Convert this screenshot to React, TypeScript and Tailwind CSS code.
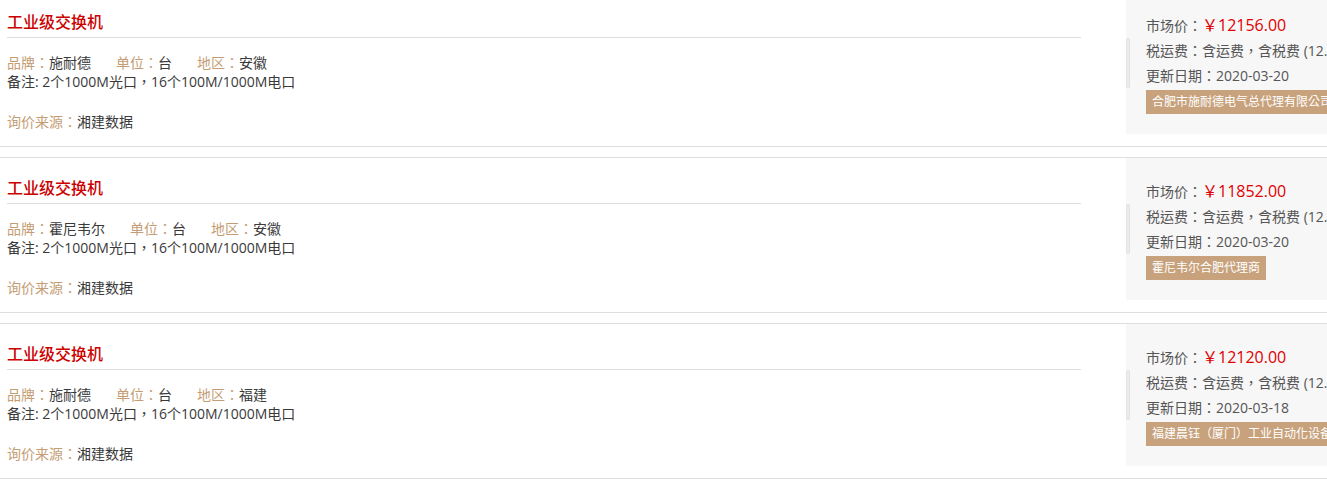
const items = [
  {
    brand: "施耐德",
    unit: "台",
    region: "安徽",
    price: "12156.00",
    date: "2020-03-20",
    seller: "合肥市施耐德电气总代理有限公司",
  },
  {
    brand: "霍尼韦尔",
    unit: "台",
    region: "安徽",
    price: "11852.00",
    date: "2020-03-20",
    seller: "霍尼韦尔合肥代理商",
  },
  {
    brand: "施耐德",
    unit: "台",
    region: "福建",
    price: "12120.00",
    date: "2020-03-18",
    seller: "福建晨钰（厦门）工业自动化设备有限公司",
  },
];

const Field = ({ label, value }: { label: string; value: string }) => (
  <span className="mr-[25px]">
    <span className="text-[#c49d74]">{label}：</span>
    <span className="text-[#3a3a3a]">{value}</span>
  </span>
);

const QuoteRow = ({ item }: { item: (typeof items)[number] }) => (
  <div className="flex h-[156px] border-y border-[#dedede] mb-[10px]">
    <div className="w-[1088px] shrink-0 px-[7px]">
      <div className="pt-[18px] pb-[3px] border-b border-[#dedede] text-[16px] leading-[24px] text-[#cc0000] font-medium">
        工业级交换机
      </div>
      <div className="mt-[15px] text-[14px] leading-[19px]">
        <Field label="品牌" value={item.brand} />
        <Field label="单位" value={item.unit} />
        <Field label="地区" value={item.region} />
      </div>
      <div className="text-[14px] leading-[19px] text-[#3a3a3a]">
        备注: 2个1000M光口，16个100M/1000M电口
      </div>
      <div className="mt-[21px] text-[14px] leading-[19px]">
        <Field label="询价来源" value="湘建数据" />
      </div>
    </div>
    <div className="relative ml-[38px] w-[260px] shrink-0 h-[142px] bg-[#f7f7f7] pl-[20px] pt-[21px] whitespace-nowrap text-[14px] leading-[25px] text-[#555]">
      <div className="absolute left-0 top-[46px] w-[4px] h-[50px] rounded-[2px] bg-[#ececec] border border-[#e2e2e2]" />
      <div>
        市场价：<span className="text-[16px] text-[#e00000]">￥{item.price}</span>
      </div>
      <div>税运费：含运费，含税费 (12.00%)</div>
      <div>更新日期：{item.date}</div>
      <div className="mt-[1px] inline-block h-[24px] px-[6px] bg-[#c8a27c] text-white text-[12px] leading-[24px]">
        {item.seller}
      </div>
    </div>
  </div>
);

export default function App() {
  return (
    <div
      className="w-[1327px] h-[480px] overflow-hidden bg-white"
      style={{ fontFamily: '"Open Sans", "Noto Sans CJK TC", sans-serif' }}
    >
      <div className="-mt-[9px] w-[1400px]">
        {items.map((item, i) => (
          <QuoteRow key={i} item={item} />
        ))}
      </div>
    </div>
  );
}
